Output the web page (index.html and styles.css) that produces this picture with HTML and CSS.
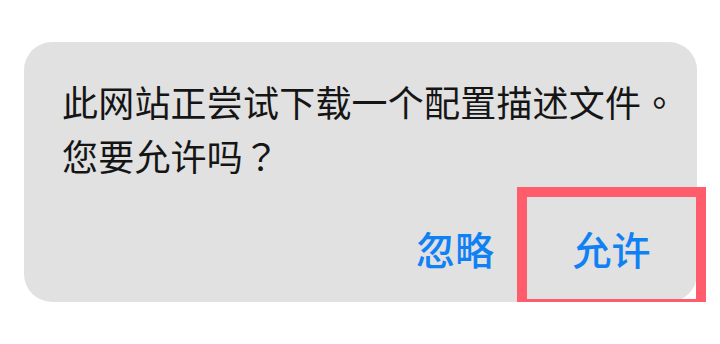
FILE: index.html
```html
<!DOCTYPE html>
<html lang="zh-CN">
<head>
  <meta charset="UTF-8">
  <title>下载配置描述文件</title>
  <link rel="stylesheet" href="styles.css">
</head>
<body>
  <div class="alert">
    <p class="alert-message">此网站正尝试下载一个配置描述文件<span class="punct" lang="zh-TW">。</span><br>您要允许吗<span class="punct" lang="zh-TW">？</span></p>
    <div class="alert-actions">
      <button class="alert-button">忽略</button>
      <button class="alert-button allow">允许</button>
    </div>
  </div>
</body>
</html>
```

FILE: styles.css
```css
body {
  margin: 0;
  background: #fff;
  font-family: "Noto Sans CJK SC", "Noto Sans", sans-serif;
}

.alert {
  width: 673px;
  height: 260px;
  margin: 42px 0 0 24px;
  background: #e1e1e1;
  border-radius: 28px;
  box-sizing: border-box;
  padding: 32px 1px 3px 38px;
  display: flex;
  flex-direction: column;
}

.alert-message {
  margin: 0;
  font-size: 36px;
  line-height: 54px;
  color: #151515;
  letter-spacing: 0.2px;
}

/* centred full-width punctuation, as on the device */
.punct {
  font-family: "Noto Sans CJK TC", "Noto Sans CJK SC", sans-serif;
}

.alert-actions {
  margin-top: auto;
  display: flex;
  justify-content: flex-end;
  align-items: center;
}

.alert-button {
  font-family: inherit;
  font-size: 39px;
  font-weight: 500;
  color: #1080f5;
  background: transparent;
  border: none;
  padding: 0;
  height: 102px;
  margin-right: 33px;
}

.alert-button.allow {
  width: 169px;
  margin-right: 0;
  outline: 10px solid #ff5d6b;
}
```
